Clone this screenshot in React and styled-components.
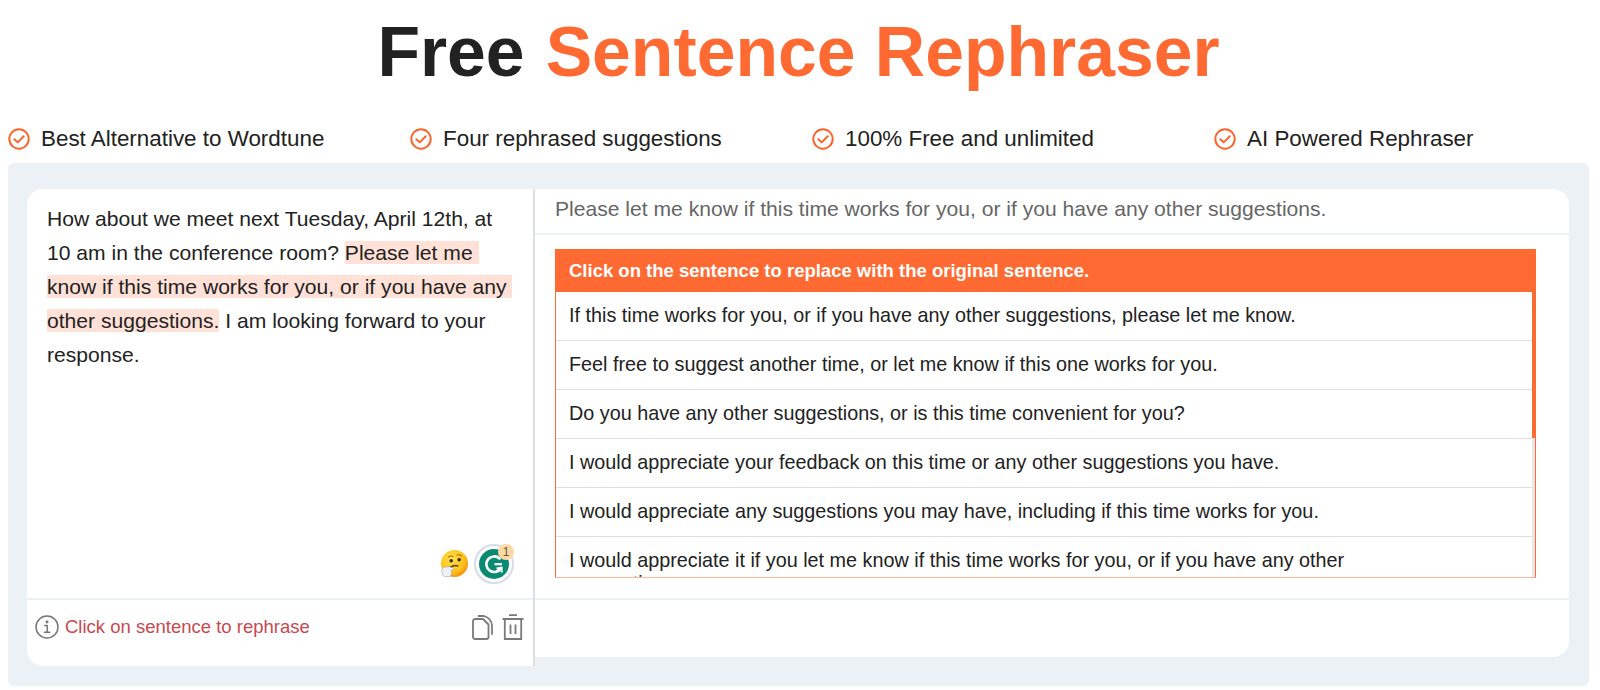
import React from 'react';
import styled, { createGlobalStyle } from 'styled-components';

const Global = createGlobalStyle`
  html, body { margin: 0; padding: 0; background: #fff; }
  body { font-family: "Liberation Sans", Arial, sans-serif; color: #222; }
  * { box-sizing: border-box; }
`;
const Page = styled.div`
  width: 1600px; height: 690px; overflow: hidden; padding: 0 11px 0 8px;
`;
const Title = styled.h1`
  margin: 0; height: 114px; padding-bottom: 8px; display: flex; align-items: center; justify-content: center; gap: 21px;
  font-size: 69.7px; font-weight: 700; line-height: 1; color: #222;
`;
const Accent = styled.span` color: #ff6a33; `;
const Features = styled.ul`
  margin: 0; padding: 0; list-style: none; height: 49px; display: grid; grid-template-columns: repeat(4, 402px); align-items: center;
`;
const Feature = styled.li`
  display: flex; align-items: center; gap: 11px; font-size: 22.4px; color: #222;
`;
const Panel = styled.section`
  height: 523px; background: #ecf1f6; border-radius: 6px; padding: 26px 20px 20px 19px;
`;
const Card = styled.div`
  display: grid; grid-template-columns: 508px 1fr; align-items: start;
`;
const LeftCol = styled.div`
  display: grid; grid-template-rows: 411px 66px; height: 477px; background: #fff; border-right: 2px solid #dcdfe3; border-radius: 16px 0 0 16px;
`;
const Editor = styled.div`
  padding: 13px 20px; font-size: 21.1px; line-height: 33.9px; color: #222; border-bottom: 2px solid #ecf1f6; position: relative;
`;
const Mark = styled.span` background: #ffe1d8; white-space: pre-wrap; `;
const Widgets = styled.div`
  position: absolute; right: 19px; bottom: 14px; display: flex; align-items: center; gap: 6px;
`;
const Badge = styled.span`
  position: absolute; top: -2px; right: -2px; width: 16px; height: 16px; border-radius: 50%; background: #fcd9a5; color: #6b5a35;
  font-size: 12px; line-height: 16px; text-align: center;
`;
const Grammarly = styled.div`
  position: relative; width: 40px; height: 40px; border-radius: 50%; border: 2px solid #d6dce8; display: flex; align-items: center; justify-content: center;
`;
const LeftFoot = styled.div`
  display: flex; align-items: center; padding: 0 9px 12px 8px; font-size: 18.5px; color: #c8494f; gap: 6px;
`;
const FootIcons = styled.div` margin-left: auto; display: flex; gap: 9px; align-items: center; `;
const RightCol = styled.div`
  display: grid; grid-template-rows: 46px 365px 57px; height: 468px; background: #fff; border-radius: 0 16px 16px 0;
`;
const Sentence = styled.div`
  border-bottom: 2px solid #ecf1f6; padding: 0 20px 4px 20px; display: flex; align-items: center; font-size: 21.1px; color: #666;
`;
const ListWrap = styled.div`
  padding: 14px 33px 0 20px; border-bottom: 2px solid #ecf1f6;
`;
const List = styled.div`
  height: 329px; width: 981px; border: 1px solid #ff6a33; border-bottom-color: #ffb7a4; position: relative; overflow: hidden;
`;
const ListHead = styled.div`
  height: 43px; margin: -1px -1px 0; background: #ff6a33; color: #fff; font-weight: 700; font-size: 18.5px; display: flex; align-items: center; padding-left: 14px;
`;
const Rows = styled.div`
  margin-right: 3px; height: 286px; overflow: hidden;
`;
const Row = styled.div`
  min-height: 49px; padding: 12px 100px 13px 13px; font-size: 19.8px; line-height: 23px; color: #222; border-bottom: 1px solid #dedfe2;
`;
const Track = styled.div`
  position: absolute; right: 0; top: 42px; bottom: 0; width: 3px; background: #e8e8e8;
`;
const Thumb = styled.div`
  height: 146px; background: #ff6a33;
`;

const Check = () => (
  <svg width="22" height="22" viewBox="0 0 22 22" fill="none" stroke="#f9652b" strokeWidth="2" strokeLinecap="round" strokeLinejoin="round">
    <circle cx="11" cy="11" r="9.7" />
    <path d="M6.4 11.2l3.3 3.2 6-6.2" />
  </svg>
);
const Info = () => (
  <svg width="24" height="24" viewBox="0 0 24 24" fill="none" stroke="#777" strokeWidth="1.5" strokeLinecap="round" strokeLinejoin="round">
    <circle cx="12" cy="12" r="11" />
    <circle cx="12" cy="7" r="0.7" fill="#777" />
    <path d="M9.8 10.6H12.2V17M9.4 17.2h5.4" />
  </svg>
);
const Copy = () => (
  <svg width="21" height="25" viewBox="0 0 21 25" fill="none" stroke="#7a7a7a" strokeWidth="1.8" strokeLinecap="round" strokeLinejoin="round">
    <path d="M3 4h8l5.500 5.500V22a2 2 0 0 1-2 2H3a2 2 0 0 1-2-2V6a2 2 0 0 1 2-2z" />
    <path d="M6.500 1H12c4.500 1.500 8 5 8 10v8" />
  </svg>
);
const Trash = () => (
  <svg width="22" height="26" viewBox="0 0 22 26" fill="none" stroke="#7a7a7a" strokeWidth="1.8">
    <path d="M0.500 5h21M7 1.200h8" />
    <path d="M2.800 5v20h16.400V5" />
    <path d="M8.500 10.500v9.500M13.500 10.500v9.500" />
  </svg>
);
const Thinking = () => (
  <svg width="28" height="28" viewBox="0 0 30 30">
    <defs>
      <radialGradient id="face" cx="40%" cy="35%" r="70%">
        <stop offset="0" stopColor="#ffe14d" />
        <stop offset="0.65" stopColor="#ffc21a" />
        <stop offset="1" stopColor="#f58a0b" />
      </radialGradient>
    </defs>
    <circle cx="15.500" cy="14.500" r="14.500" fill="url(#face)" />
    <circle cx="12" cy="11.500" r="1.900" fill="#3c2a1a" />
    <circle cx="20.500" cy="10.500" r="1.900" fill="#3c2a1a" />
    <path d="M9 7.500q3-2 5 -0.500M18 5.500q3-1 5 1" stroke="#a8691a" strokeWidth="1.100" fill="none" strokeLinecap="round" />
    <path d="M11 18.500q4-3 8-1.500" stroke="#5a3a18" strokeWidth="1.600" fill="none" strokeLinecap="round" />
    <path d="M2 22c0-2.500 1.500-4 3-3.500l3-.5c2-.5 6 1 7 2 .6 1-1 1.600-3 1.300l.5 2.200c.3 2-.5 4-2.500 5H5c-2 -.6-3-2.500-3-6.500z" fill="#eef0f4" stroke="#9a9ea8" strokeWidth="0.600" />
  </svg>
);
const GLogo = () => (
  <svg width="30" height="30" viewBox="0 0 30 30">
    <circle cx="15" cy="15" r="15" fill="#0b8a73" />
    <path d="M20.500 9.500A7.800 7.800 0 1 0 22 19" fill="none" stroke="#fff" strokeWidth="2.600" strokeLinecap="round" />
    <path d="M15.500 15.200h7.500" fill="none" stroke="#fff" strokeWidth="2.200" />
    <path d="M17.500 19.500l5-.8.300 4.800" fill="none" stroke="#fff" strokeWidth="2" />
  </svg>
);

const features = ['Best Alternative to Wordtune', 'Four rephrased suggestions', '100% Free and unlimited', 'AI Powered Rephraser'];
const suggestions = [
  'If this time works for you, or if you have any other suggestions, please let me know.',
  'Feel free to suggest another time, or let me know if this one works for you.',
  'Do you have any other suggestions, or is this time convenient for you?',
  'I would appreciate your feedback on this time or any other suggestions you have.',
  'I would appreciate any suggestions you may have, including if this time works for you.',
  'I would appreciate it if you let me know if this time works for you, or if you have any other suggestions.',
];

export default function App() {
  return (
    <Page>
      <Global />
      <Title><span>Free</span><Accent>Sentence Rephraser</Accent></Title>
      <Features>
        {features.map((f) => <Feature key={f}><Check />{f}</Feature>)}
      </Features>
      <Panel>
        <Card>
          <LeftCol>
            <Editor>
              How about we meet next Tuesday, April 12th, at 10 am in the conference room? <Mark>Please let me know if this time works for you, or if you have any other suggestions.</Mark> I am looking forward to your response.
              <Widgets>
                <Thinking />
                <Grammarly><GLogo /><Badge>1</Badge></Grammarly>
              </Widgets>
            </Editor>
            <LeftFoot>
              <Info />
              Click on sentence to rephrase
              <FootIcons><Copy /><Trash /></FootIcons>
            </LeftFoot>
          </LeftCol>
          <RightCol>
            <Sentence>Please let me know if this time works for you, or if you have any other suggestions.</Sentence>
            <ListWrap>
              <List>
                <ListHead>Click on the sentence to replace with the original sentence.</ListHead>
                <Rows>
                  {suggestions.map((s) => <Row key={s}>{s}</Row>)}
                </Rows>
                <Track><Thumb /></Track>
              </List>
            </ListWrap>
            <div />
          </RightCol>
        </Card>
      </Panel>
    </Page>
  );
}
